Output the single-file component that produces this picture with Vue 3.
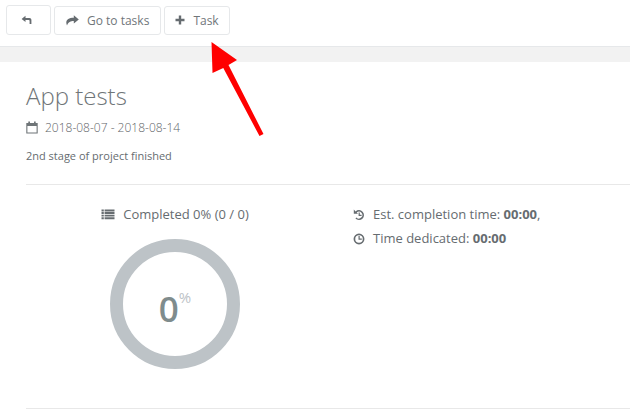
<template>
  <div class="page">
    <div class="toolbar">
      <button class="btn back">
        <svg width="11" height="10" viewBox="0 0 11 10"><path d="M4.5 0.8 L0.6 3.9 L4.5 7 V5 H7.6 C8.2 5 8.6 5.4 8.6 6 V9 H10.4 V5 C10.4 3.8 9.6 3 8.4 3 H4.5 Z" fill="#666c70"/></svg>
      </button>
      <button class="btn">
        <svg width="13" height="11" viewBox="0 0 13 11"><path d="M7.8 0.2 L12.8 4.4 L7.8 8.6 V6 C4.6 6 2.4 7 1 10.6 C0.6 9.6 0.3 8.6 0.3 7.6 C0.3 4.6 3 2.8 7.8 2.8 Z" fill="#666c70"/></svg>
        Go to tasks
      </button>
      <button class="btn task">
        <svg width="10" height="10" viewBox="0 0 10 10"><path d="M3.8 0.5 H6.2 V3.8 H9.5 V6.2 H6.2 V9.5 H3.8 V6.2 H0.5 V3.8 H3.8 Z" fill="#666c70"/></svg>
        Task
      </button>
    </div>
    <div class="band"></div>

    <div class="content">
      <h1>App tests</h1>
      <div class="dates">
        <svg width="12" height="13" viewBox="0 0 12 13"><path d="M2.3 0.5 H4 V2 H8 V0.5 H9.7 V2 H11.7 V12.5 H0.3 V2 H2.3 Z M1.4 5 V11.4 H10.6 V5 Z" fill="#6f7578" fill-rule="evenodd"/></svg>
        <span>{{ dateRange }}</span>
      </div>
      <p class="desc">2nd stage of project finished</p>
      <hr />

      <div class="stats">
        <div class="progress">
          <div class="label">
            <svg width="14" height="11" viewBox="0 0 14 11"><path d="M0.5 0.5 H2.8 V2.4 H0.5 Z M3.6 0.5 H13.5 V2.4 H3.6 Z M0.5 3.1 H2.8 V5 H0.5 Z M3.6 3.1 H13.5 V5 H3.6 Z M0.5 5.7 H2.8 V7.6 H0.5 Z M3.6 5.7 H13.5 V7.6 H3.6 Z M0.5 8.3 H2.8 V10.2 H0.5 Z M3.6 8.3 H13.5 V10.2 H3.6 Z" fill="#666c70"/></svg>
            Completed 0% (0 / 0)
          </div>
          <div class="ring">
            <span class="num">0</span><span class="pct">%</span>
          </div>
        </div>
        <div class="times">
          <div class="row">
            <svg width="12" height="12" viewBox="0 0 12 12"><path d="M2.6 2.4 A5 5 0 1 1 2.4 9.6 L3.4 8.4 A3.4 3.4 0 1 0 3.7 3.5 L5 4.8 H0.8 V0.6 Z" fill="#666c70"/><path d="M5.6 3.4 H6.8 V5.8 H8.6 V7 H5.6 Z" fill="#666c70"/></svg>
            <span>Est. completion time: <b>00:00</b>,</span>
          </div>
          <div class="row">
            <svg width="12" height="12" viewBox="0 0 12 12"><circle cx="6" cy="6" r="4.6" fill="none" stroke="#666c70" stroke-width="1.7"/><path d="M5.5 3 H6.7 V5.5 H8.8 V6.7 H5.5 Z" fill="#666c70"/></svg>
            <span>Time dedicated: <b>00:00</b></span>
          </div>
        </div>
      </div>
      <hr class="bottom" />
    </div>

    <svg class="arrow" width="70" height="105" viewBox="0 0 70 105">
      <path d="M1.5 2 L27 20 L18.5 25 L53.5 94 L49.5 96 L13.3 28 L2.5 33 Z" fill="#ff0000"/>
    </svg>
  </div>
</template>

<script setup>
const dateRange = '2018-08-07 - 2018-08-14'
</script>

<style>
html, body { background: #fff; overflow: hidden; }
</style>

<style scoped>
.page {
  position: relative;
  width: 630px;
  height: 415px;
  overflow: hidden;
  font-family: "Open Sans", sans-serif;
  font-size: 13px;
  color: #666c70;
  background: #fff;
}
.toolbar {
  display: flex;
  align-items: center;
  gap: 3px;
  height: 47px;
  padding: 0 0 6px 6px;
  box-sizing: border-box;
  border-bottom: 1px solid #e6e8ea;
}
.btn {
  display: inline-flex;
  align-items: center;
  gap: 8px;
  height: 29px;
  padding: 0 11px;
  background: #fff;
  border: 1px solid #e6e8ea;
  border-radius: 3px;
  font: inherit;
  font-size: 12px;
  color: #70767a;
}
.btn.task {
  padding: 0 10px;
}
.btn.back {
  width: 45px;
  height: 30px;
  padding: 0 0 0 14px;
}
.band {
  height: 15px;
  background: #f2f2f2;
}
.content {
  padding: 0 0 0 26px;
}
h1 {
  margin: 17px 0 0;
  font-size: 24px;
  font-weight: 300;
  line-height: 33px;
  color: #6f7578;
}
.dates {
  display: flex;
  align-items: center;
  gap: 7px;
  margin-top: 7px;
  font-size: 12px;
  font-weight: 300;
  line-height: 17px;
  color: #5f6569;
}
.desc {
  margin: 12px 0 0;
  font-size: 11px;
  line-height: 15px;
  color: #666c70;
}
hr {
  margin: 21px 0 0;
  border: 0;
  border-top: 1px solid #e8e8e8;
}
.stats {
  display: flex;
  margin-top: 21px;
}
.progress {
  width: 298px;
  display: flex;
  flex-direction: column;
  align-items: center;
}
.label {
  display: flex;
  align-items: center;
  gap: 8px;
  line-height: 17px;
}
.ring {
  width: 130px;
  height: 130px;
  box-sizing: border-box;
  margin-top: 16px;
  border: 13px solid #bdc3c7;
  border-radius: 50%;
  display: flex;
  align-items: center;
  justify-content: center;
}
.num {
  margin-top: 8px;
  font-size: 35px;
  font-weight: 600;
  line-height: 1;
  color: #7f8c8d;
}
.pct {
  align-self: flex-start;
  margin-top: 38px;
  font-size: 15px;
  font-weight: 400;
  line-height: 1;
  color: #bdc3c7;
}
.times {
  margin-left: 29px;
}
.row {
  display: flex;
  align-items: center;
  gap: 8px;
  line-height: 17px;
  margin-bottom: 7px;
}
.row b {
  font-weight: 700;
}
hr.bottom {
  margin-top: 39px;
}
.arrow {
  position: absolute;
  left: 210px;
  top: 40px;
}
</style>
